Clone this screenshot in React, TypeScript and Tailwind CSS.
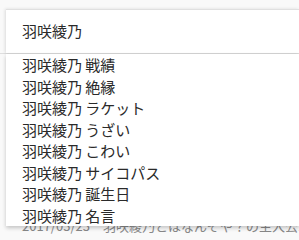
import React from "react";

const items = [
  "羽咲綾乃 戦績",
  "羽咲綾乃 絶縁",
  "羽咲綾乃 ラケット",
  "羽咲綾乃 うざい",
  "羽咲綾乃 こわい",
  "羽咲綾乃 サイコパス",
  "羽咲綾乃 誕生日",
  "羽咲綾乃 名言",
];

export default function App() {
  return (
    <div
      className="h-[240px] w-[299px] overflow-hidden bg-[#f9f9f9] pt-[9px] text-[#2a2a2a]"
      style={{ fontFamily: '"Noto Sans CJK JP", "Noto Sans", sans-serif' }}
    >
      <div className="border-b border-[#dedede]">
        <div className="ml-[6px] flex h-[44px] items-center border-t border-[#e0e0e0] bg-white pl-[16px] text-[15px] shadow-[-1px_0_3px_rgba(0,0,0,0.12)]">
          羽咲綾乃
        </div>
      </div>
      <div className="relative z-10 ml-[6px] h-[172px] bg-white shadow-[0_2px_4px_rgba(0,0,0,0.22)]">
        {items.map((t) => (
          <div key={t} className="h-[21.5px] pl-[16px] text-[15px] leading-[21.5px]">
            {t}
          </div>
        ))}
      </div>
      <div className="-mt-[8px] whitespace-nowrap pl-[22px] text-[13px] leading-[16px] text-[#888]">
        2017/03/23　羽咲綾乃とはなんぞや？の主人公エスパー
      </div>
    </div>
  );
}
